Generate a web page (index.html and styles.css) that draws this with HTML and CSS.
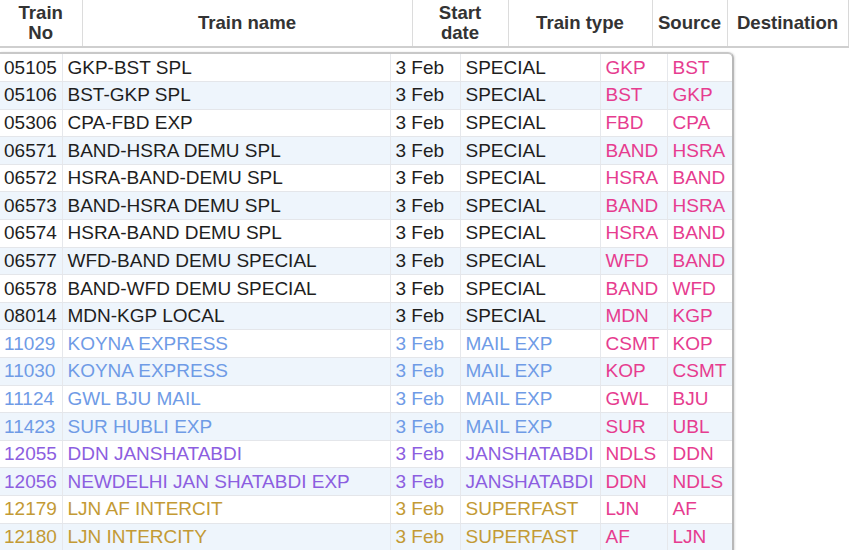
FILE: index.html
```html
<!DOCTYPE html>
<html>
<head>
<meta charset="utf-8">
<link rel="stylesheet" href="styles.css">
</head>
<body>
<table class="head">
  <colgroup><col class="h1"><col class="h2"><col class="h3"><col class="h4"><col class="h5"><col class="h6"></colgroup>
  <tr><th>Train<br>No</th><th>Train name</th><th>Start<br>date</th><th>Train type</th><th>Source</th><th>Destination</th></tr>
</table>
<div class="bodywrap">
<table class="rows">
  <colgroup><col class="c1"><col class="c2"><col class="c3"><col class="c4"><col class="c5"><col class="c6"></colgroup>
  <tr class="k"><td>05105</td><td>GKP-BST SPL</td><td>3 Feb</td><td>SPECIAL</td><td class="p">GKP</td><td class="p">BST</td></tr>
  <tr class="k"><td>05106</td><td>BST-GKP SPL</td><td>3 Feb</td><td>SPECIAL</td><td class="p">BST</td><td class="p">GKP</td></tr>
  <tr class="k"><td>05306</td><td>CPA-FBD EXP</td><td>3 Feb</td><td>SPECIAL</td><td class="p">FBD</td><td class="p">CPA</td></tr>
  <tr class="k"><td>06571</td><td>BAND-HSRA DEMU SPL</td><td>3 Feb</td><td>SPECIAL</td><td class="p">BAND</td><td class="p">HSRA</td></tr>
  <tr class="k"><td>06572</td><td>HSRA-BAND-DEMU SPL</td><td>3 Feb</td><td>SPECIAL</td><td class="p">HSRA</td><td class="p">BAND</td></tr>
  <tr class="k"><td>06573</td><td>BAND-HSRA DEMU SPL</td><td>3 Feb</td><td>SPECIAL</td><td class="p">BAND</td><td class="p">HSRA</td></tr>
  <tr class="k"><td>06574</td><td>HSRA-BAND DEMU SPL</td><td>3 Feb</td><td>SPECIAL</td><td class="p">HSRA</td><td class="p">BAND</td></tr>
  <tr class="k"><td>06577</td><td>WFD-BAND DEMU SPECIAL</td><td>3 Feb</td><td>SPECIAL</td><td class="p">WFD</td><td class="p">BAND</td></tr>
  <tr class="k"><td>06578</td><td>BAND-WFD DEMU SPECIAL</td><td>3 Feb</td><td>SPECIAL</td><td class="p">BAND</td><td class="p">WFD</td></tr>
  <tr class="k"><td>08014</td><td>MDN-KGP LOCAL</td><td>3 Feb</td><td>SPECIAL</td><td class="p">MDN</td><td class="p">KGP</td></tr>
  <tr class="b"><td>11029</td><td>KOYNA EXPRESS</td><td>3 Feb</td><td>MAIL EXP</td><td class="p">CSMT</td><td class="p">KOP</td></tr>
  <tr class="b"><td>11030</td><td>KOYNA EXPRESS</td><td>3 Feb</td><td>MAIL EXP</td><td class="p">KOP</td><td class="p">CSMT</td></tr>
  <tr class="b"><td>11124</td><td>GWL BJU MAIL</td><td>3 Feb</td><td>MAIL EXP</td><td class="p">GWL</td><td class="p">BJU</td></tr>
  <tr class="b"><td>11423</td><td>SUR HUBLI EXP</td><td>3 Feb</td><td>MAIL EXP</td><td class="p">SUR</td><td class="p">UBL</td></tr>
  <tr class="v"><td>12055</td><td>DDN JANSHATABDI</td><td>3 Feb</td><td>JANSHATABDI</td><td class="p">NDLS</td><td class="p">DDN</td></tr>
  <tr class="v"><td>12056</td><td>NEWDELHI JAN SHATABDI EXP</td><td>3 Feb</td><td>JANSHATABDI</td><td class="p">DDN</td><td class="p">NDLS</td></tr>
  <tr class="g"><td>12179</td><td>LJN AF INTERCIT</td><td>3 Feb</td><td>SUPERFAST</td><td class="p">LJN</td><td class="p">AF</td></tr>
  <tr class="g"><td>12180</td><td>LJN INTERCITY</td><td>3 Feb</td><td>SUPERFAST</td><td class="p">AF</td><td class="p">LJN</td></tr>
</table>
</div>
</body>
</html>
```

FILE: styles.css
```css
html, body {
  margin: 0;
  padding: 0;
  background: #ffffff;
  font-family: "Liberation Sans", Arial, sans-serif;
  overflow: hidden;
}
table {
  border-collapse: collapse;
  table-layout: fixed;
}
.head {
  width: 848px;
  border-bottom: 2px solid #cfcfcf;
  border-right: 1px solid #d8d8d8;
}
.h1 { width: 82px; }
.h2 { width: 330px; }
.h3 { width: 96px; }
.h4 { width: 144px; }
.h5 { width: 75px; }
.h6 { width: 121px; }
.head th {
  height: 46px;
  padding: 0;
  font-size: 18.6px;
  font-weight: bold;
  line-height: 20px;
  color: #333333;
  text-align: center;
  vertical-align: middle;
  border-left: 1px solid #dcdcdc;
}
.head th:first-child { border-left: none; }
.bodywrap {
  margin-top: 4px;
  width: 732px;
  border-top: 2px solid #c8c8c8;
  border-right: 2px solid #b8b8b8;
  border-top-right-radius: 6px;
  box-shadow: 1px 0 2px rgba(0,0,0,0.12);
  overflow: hidden;
}
.rows { width: 732px; }
.c1 { width: 62px; }
.c2 { width: 328px; }
.c3 { width: 70px; }
.c4 { width: 140px; }
.c5 { width: 67px; }
.c6 { width: 65px; }
.rows tr { height: 27.6px; }
.rows tr:nth-child(even) { background: #eef5fc; }
.rows td {
  padding: 0 0 0 5px;
  font-size: 19px;
  line-height: 26px;
  white-space: nowrap;
  overflow: hidden;
  border-bottom: 1px solid #e4e6ea;
  border-left: 1px solid #e6e8ec;
}
.rows td:first-child { border-left: none; padding-left: 4px; }
.k td { color: #1e1e1e; }
.b td { color: #6f9be6; }
.v td { color: #8c5ee0; }
.g td { color: #c39a35; }
.rows td.p { color: #e63c8f; }
```
